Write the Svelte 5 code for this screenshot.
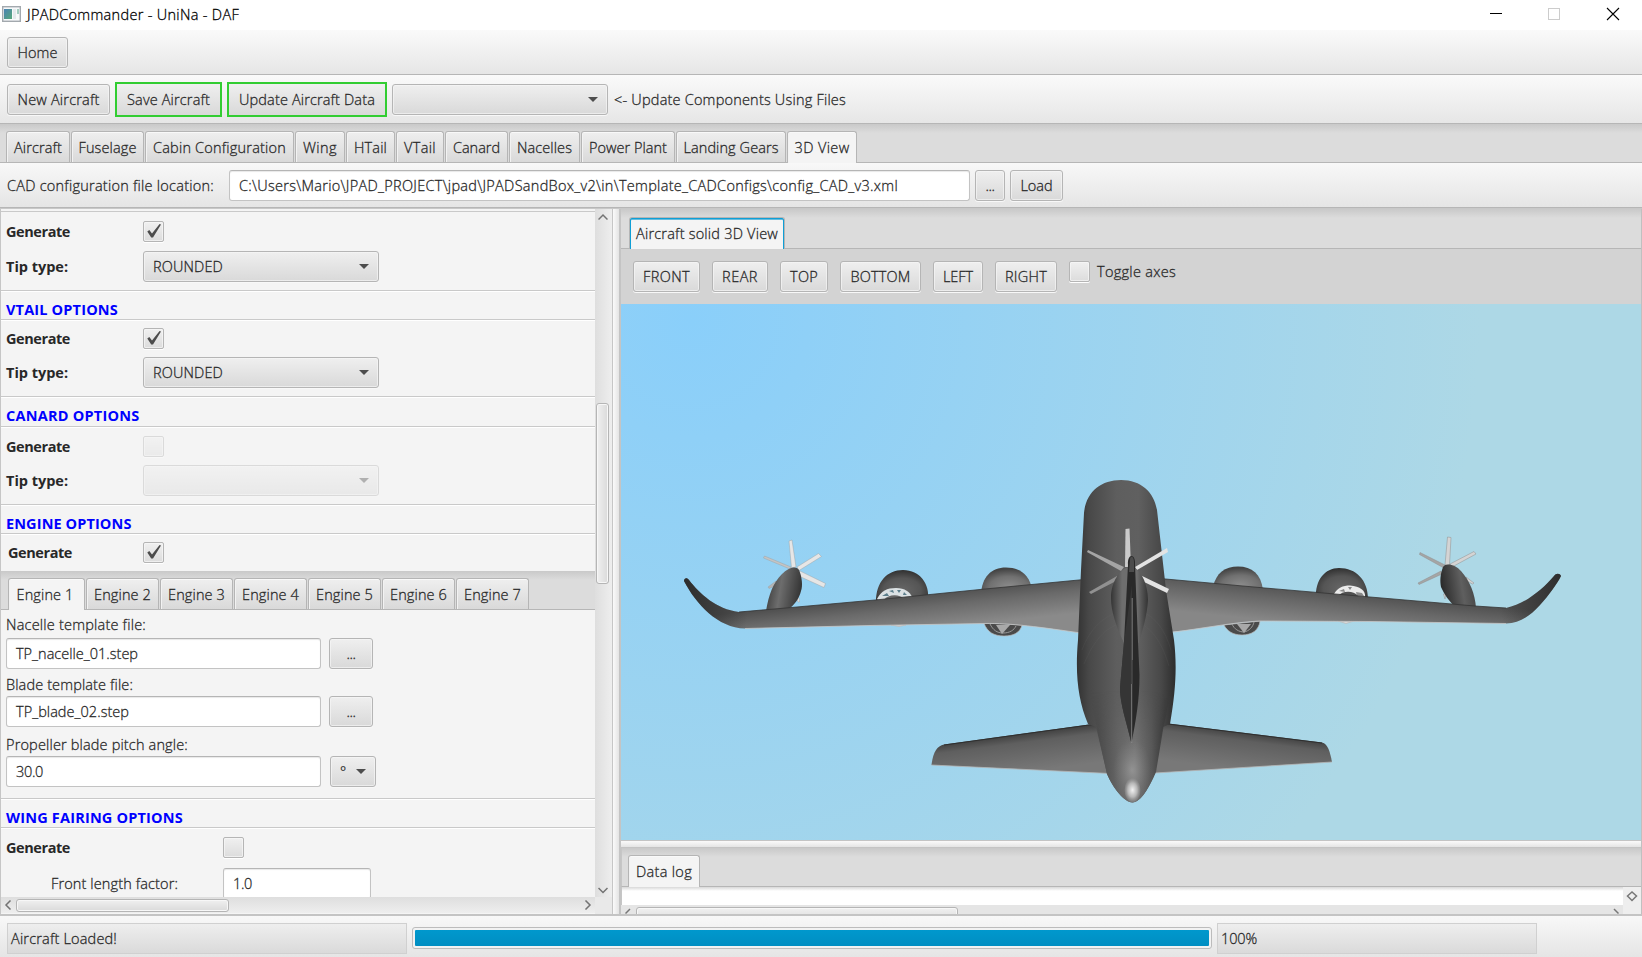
<script>
  // Tunes the tracking of a label so that it takes up the given width.
  function fit(node, width) {
    const natural = node.getBoundingClientRect().width;
    const n = node.textContent.length;
    if (width && n) node.style.letterSpacing = ((width - natural) / n).toFixed(3) + 'px';
  }

  const tabs = [
    ['Aircraft', 64, 48], ['Fuselage', 73, 58], ['Cabin Configuration', 149, 133],
    ['Wing', 50, 34], ['HTail', 49, 33], ['VTail', 48, 32], ['Canard', 63, 47],
    ['Nacelles', 71, 55], ['Power Plant', 94, 78], ['Landing Gears', 110, 95], ['3D View', 70, 55]
  ];
  const engines = [1, 2, 3, 4, 5, 6, 7];
  const views = [
    ['FRONT', 67, 47], ['REAR', 56, 36], ['TOP', 48, 28], ['BOTTOM', 81, 60],
    ['LEFT', 50, 30], ['RIGHT', 62, 42]
  ];
  const leftWing = 'M684 581C684 578 687 577 689 580C700 594 716 609 739 612L780 608.5 875 600 985 589 1084 579.5V633.5L1050 628.5C1020 625 1000 623 985 623.5L870 625.5 745 628.5C718 628 696 604 684 581Z';
  const rightWing = 'M1160 578.5 1265 588 1370 597 1475 606 1506 608C1525 604 1542 590 1554 576C1556 573 1560 573 1561 576C1557 584 1549 595 1540 605C1530 616 1520 623 1506 623.5L1370 621.5 1260 621C1235 622 1200 629 1170 632Z';
</script>

{#snippet t(text, w)}<span class="t" use:fit={w}>{text}</span>{/snippet}

{#snippet check(on, disabled)}
  <span class="check" class:disabled>
    {#if on}
      <svg width="21" height="21" viewBox="0 0 21 21"><path d="M4.3 10.400 6.300 9 9 12.600 16.600 3 18 3.400 10 16.600H8.200Z" fill="#4c4c4c" /></svg>
    {/if}
  </span>
{/snippet}

{#snippet combo(cls, text, w, disabled)}
  <span class="btn combo {cls}" class:disabled>
    <span>{#if text}{@render t(text, w)}{/if}</span>
    <svg width="10" height="5" viewBox="0 0 10 5"><path d="M0 0H10L5 5Z" fill="#4d4d4d" /></svg>
  </span>
{/snippet}

{#snippet chevron(d)}
  <svg class="chev" width="10" height="10" viewBox="0 0 10 10"><path {d} fill="none" stroke="#737373" stroke-width="1.5" /></svg>
{/snippet}

<div class="window">
  <header class="title">
    <svg width="19" height="16" viewBox="0 0 19 16">
      <defs><linearGradient id="ico" x2="1" y2="1"><stop stop-color="#4b83b5" /><stop offset="1" stop-color="#57a87a" /></linearGradient></defs>
      <rect x=".7" y=".7" width="17.6" height="14.6" fill="#f7f9fa" stroke="#a3a9ae" stroke-width="1.4" />
      <rect x="2" y="3" width="8" height="10" fill="url(#ico)" />
      <path d="M11 3h3v10h-3z" fill="#e4e9ec" /><path d="M16 3v5" stroke="#51a086" />
    </svg>
    {@render t('JPADCommander - UniNa - DAF', 212)}
    <svg class="win" width="140" height="14" viewBox="0 0 140 14">
      <path d="M5 6.5H17" stroke="#000" fill="none" />
      <rect x="63.5" y="1.5" width="11" height="11" fill="none" stroke="#ccc" />
      <path d="M122 1 134 13M134 1 122 13" stroke="#000" stroke-width="1.1" fill="none" />
    </svg>
  </header>

  <div class="bar home"><span class="btn w-home">{@render t('Home', 40)}</span></div>

  <div class="bar actions">
    <span class="btn w-new">{@render t('New Aircraft', 82)}</span>
    <span class="btn green w-save">{@render t('Save Aircraft', 83)}</span>
    <span class="btn green w-update">{@render t('Update Aircraft Data', 136)}</span>
    {@render combo('w-files', '', 0, false)}
    <span class="hint">{@render t('<- Update Components Using Files', 232)}</span>
  </div>

  <nav class="tabs main">
    {#each tabs as [name, w, tw], i}
      <span class="tab" class:active={i === 10} style="width:{w}px">{@render t(name, tw)}</span>
    {/each}
  </nav>

  <div class="bar cad">
    <span class="cadlabel">{@render t('CAD configuration file location:', 207)}</span>
    <span class="field w-path">{@render t('C:\\Users\\Mario\\JPAD_PROJECT\\jpad\\JPADSandBox_v2\\in\\Template_CADConfigs\\config_CAD_v3.xml', 659)}</span>
    <span class="btn w-dots">{@render t('...', 9)}</span>
    <span class="btn w-load">{@render t('Load', 32)}</span>
  </div>

  <main>
    <section class="left">
      <div class="view">
        <div class="group g1">
          <div class="row r-check"><b>{@render t('Generate', 64)}</b>{@render check(true, false)}</div>
          <div class="row r-combo"><b>{@render t('Tip type:', 62)}</b>{@render combo('w-tip', 'ROUNDED', 70, false)}</div>
        </div>
        <h2 class="h29">{@render t('VTAIL OPTIONS', 112)}</h2>
        <div class="group g2">
          <div class="row r-check"><b>{@render t('Generate', 64)}</b>{@render check(true, false)}</div>
          <div class="row r-combo"><b>{@render t('Tip type:', 62)}</b>{@render combo('w-tip', 'ROUNDED', 70, false)}</div>
        </div>
        <h2 class="h30">{@render t('CANARD OPTIONS', 133.5)}</h2>
        <div class="group g3">
          <div class="row r-check"><b>{@render t('Generate', 64)}</b>{@render check(false, true)}</div>
          <div class="row r-combo"><b>{@render t('Tip type:', 62)}</b>{@render combo('w-tip', '', 0, true)}</div>
        </div>
        <h2 class="h29">{@render t('ENGINE OPTIONS', 125.5)}</h2>
        <div class="row r-engine"><b>{@render t('Generate', 64)}</b>{@render check(true, false)}</div>
        <nav class="tabs engine">
          {#each engines as n}
            <span class="tab" class:active={n === 1}>{@render t('Engine ' + n, 57)}</span>
          {/each}
        </nav>
        <div class="form">
          <div class="lab l1">{@render t('Nacelle template file:', 140)}</div>
          <div class="frow"><span class="field">{@render t('TP_nacelle_01.step', 122)}</span><span class="btn">{@render t('...', 9)}</span></div>
          <div class="lab l2">{@render t('Blade template file:', 127)}</div>
          <div class="frow"><span class="field">{@render t('TP_blade_02.step', 113)}</span><span class="btn">{@render t('...', 9)}</span></div>
          <div class="lab l3">{@render t('Propeller blade pitch angle:', 182)}</div>
          <div class="frow unit"><span class="field">{@render t('30.0', 27)}</span>{@render combo('w-deg', '°', 5, false)}</div>
        </div>
        <h2 class="h29">{@render t('WING FAIRING OPTIONS', 177)}</h2>
        <div class="row wide"><b>{@render t('Generate', 64)}</b>{@render check(false, false)}</div>
        <div class="row wide indent"><span class="name">{@render t('Front length factor:', 127)}</span><span class="field">{@render t('1.0', 19)}</span></div>
      </div>
      <div class="vbar">
        {@render chevron('M.5 7.5 5 3 9.5 7.5')}
        <div class="track"><span class="thumb"></span></div>
        {@render chevron('M.5 2 5 6.5 9.5 2')}
      </div>
      <div class="hbar">
        {@render chevron('M8.5.5 4 5 8.5 9.5')}
        <span class="thumb"></span>
        {@render chevron('M2.5.5 7 5 2.5 9.5')}
      </div>
      <div class="corner"></div>
    </section>

    <div class="split"></div>

    <section class="right">
      <nav class="tabs solid"><span class="tab active focus">{@render t('Aircraft solid 3D View', 142)}</span></nav>
      <div class="views">
        {#each views as [name, w, tw]}
          <span class="btn" style="width:{w}px">{@render t(name, tw)}</span>
        {/each}
        <span class="toggle">{@render check(false, false)}{@render t('Toggle axes', 79)}</span>
      </div>

      <svg class="scene" width="1020" height="536" viewBox="621 304 1020 536">
        <defs>
          <radialGradient id="sky" gradientUnits="userSpaceOnUse" cx="690" cy="320" r="790">
            <stop offset="0" stop-color="#8acffa" /><stop offset=".15" stop-color="#8fd0f7" /><stop offset="1" stop-color="#add8e6" />
          </radialGradient>
          <linearGradient id="wingL" gradientUnits="userSpaceOnUse" x1="880" y1="597" x2="884" y2="634">
            <stop stop-color="#4e4e4e" /><stop offset=".4" stop-color="#6a6a6a" /><stop offset="1" stop-color="#8a8a8a" />
          </linearGradient>
          <linearGradient id="wingR" gradientUnits="userSpaceOnUse" x1="1362" y1="592" x2="1358" y2="630">
            <stop stop-color="#4e4e4e" /><stop offset=".4" stop-color="#676767" /><stop offset="1" stop-color="#878787" />
          </linearGradient>
          <linearGradient id="tipL" gradientUnits="userSpaceOnUse" x1="684" y1="590" x2="750" y2="600">
            <stop stop-color="#222" stop-opacity=".75" /><stop offset="1" stop-color="#222" stop-opacity="0" />
          </linearGradient>
          <linearGradient id="tipR" gradientUnits="userSpaceOnUse" x1="1561" y1="585" x2="1498" y2="600">
            <stop stop-color="#222" stop-opacity=".7" /><stop offset="1" stop-color="#222" stop-opacity="0" />
          </linearGradient>
          <linearGradient id="tailL" gradientUnits="userSpaceOnUse" x1="1020" y1="733" x2="1025" y2="772">
            <stop stop-color="#3e3e3e" /><stop offset=".25" stop-color="#5f5f5f" /><stop offset="1" stop-color="#787878" />
          </linearGradient>
          <linearGradient id="tailR" gradientUnits="userSpaceOnUse" x1="1245" y1="731" x2="1240" y2="770">
            <stop stop-color="#3e3e3e" /><stop offset=".25" stop-color="#5f5f5f" /><stop offset="1" stop-color="#787878" />
          </linearGradient>
          <linearGradient id="body" gradientUnits="userSpaceOnUse" x1="1077" y1="0" x2="1176" y2="0">
            <stop stop-color="#333" /><stop offset=".12" stop-color="#484848" /><stop offset=".4" stop-color="#5e5e5e" /><stop offset=".62" stop-color="#606060" /><stop offset=".85" stop-color="#484848" /><stop offset="1" stop-color="#2c2c2c" />
          </linearGradient>
          <linearGradient id="cone" gradientUnits="userSpaceOnUse" x1="1098" y1="0" x2="1165" y2="0">
            <stop stop-color="#4a4a4a" /><stop offset=".3" stop-color="#656565" /><stop offset=".55" stop-color="#747474" /><stop offset=".8" stop-color="#595959" /><stop offset="1" stop-color="#353535" />
          </linearGradient>
          <linearGradient id="fade" gradientUnits="userSpaceOnUse" x1="0" y1="690" x2="0" y2="750">
            <stop stop-color="#fff" stop-opacity="0" /><stop offset="1" stop-color="#fff" />
          </linearGradient>
          <mask id="fadeMask" maskUnits="userSpaceOnUse" x="1060" y="640" width="150" height="170"><rect x="1060" y="640" width="150" height="170" fill="url(#fade)" /></mask>
          <radialGradient id="spot"><stop stop-color="#f2f2f2" /><stop offset=".6" stop-color="#b5b5b5" /><stop offset="1" stop-color="#888" stop-opacity=".5" /></radialGradient>
          <radialGradient id="glow"><stop stop-color="#a8a8a8" stop-opacity=".6" /><stop offset="1" stop-color="#888" stop-opacity="0" /></radialGradient>
          <radialGradient id="podDark" cx=".5" cy=".6" r=".6"><stop stop-color="#666" /><stop offset=".6" stop-color="#555" /><stop offset="1" stop-color="#303030" /></radialGradient>
          <radialGradient id="podLight" cx=".55" cy=".7" r=".65"><stop stop-color="#8d8d8d" /><stop offset=".6" stop-color="#707070" /><stop offset="1" stop-color="#444" /></radialGradient>
          <linearGradient id="podL" x1="0" y1=".4" x2="1" y2=".6"><stop stop-color="#3b3b3b" /><stop offset=".4" stop-color="#6d6d6d" /><stop offset="1" stop-color="#303030" /></linearGradient>
          <linearGradient id="podR" x1="0" y1=".6" x2="1" y2=".4"><stop stop-color="#262626" /><stop offset=".6" stop-color="#5f5f5f" /><stop offset="1" stop-color="#444" /></linearGradient>
          <linearGradient id="midpod" x2="1"><stop stop-color="#353535" /><stop offset=".3" stop-color="#6e6e6e" /><stop offset=".7" stop-color="#6e6e6e" /><stop offset="1" stop-color="#333" /></linearGradient>
        </defs>
        <rect x="621" y="304" width="1020" height="536" fill="url(#sky)" />

        <!-- outer propellers -->
        <g fill="#e6e6e6" stroke="#9a9a9a" stroke-width=".4">
          <path d="M791.500 568 789 541 792 540 796 567Z" />
          <path d="M797 567 818.500 553.500 821.500 556.500 799 570.500Z" />
          <path d="M799 570.500 825.500 583.500 824 587.500 801 577Z" />
          <path d="M790 569 763.500 558 764.500 556 791 567Z" fill="#c4c4c4" />
          <path d="M776 581 768 587 769 588.500 775 586Z" fill="#b5b5b5" />
          <path d="M797 598 799 598 799.500 602 798 602Z" />
        </g>
        <g fill="#d4d4d4" stroke="#8f8f8f" stroke-width=".5">
          <path d="M1445 565 1447.500 537 1451 537.500 1449.500 565Z" />
          <path d="M1450 564 1474 551.500 1476 554 1452 567Z" />
          <path d="M1445 565 1420 552.500 1419.500 554.500 1443 567.500Z" fill="#a5a5a5" />
          <path d="M1441 571 1418 583 1419 584.500 1442 574Z" fill="#a5a5a5" />
          <path d="M1466 577 1474 583 1472.500 584 1467 581Z" />
          <path d="M1443.500 594 1446 594 1445 599Z" />
        </g>

        <!-- engine pods above the wing -->
        <path d="M876 602C876 582 887 570 903 570C920 570 930 584 928 600V604H876Z" fill="url(#podDark)" />
        <path d="M877 599C881 591 887 588 896 588C905 588 910 592 912 597L906 600H878Z" fill="#dbe1e3" />
        <path d="M882 596l5-3 2 3zM889 591l4-1 1 3zM897 590h4l-2 3zM904 592l3 3h-4z" fill="#5c7e8b" />
        <path d="M884 600C888 594 900 594 904 599Z" fill="#656565" />
        <path d="M981 594C982 577 991 567.500 1006 567.500C1020 567.500 1030 575 1032 590V596H981Z" fill="url(#podLight)" />
        <path d="M1213 587C1216 573 1225 566.500 1238 566.500C1252 566.500 1261 574 1263 590V594H1213Z" fill="url(#podLight)" />
        <path d="M1316 598C1315 580 1325 568 1339 568C1356 568 1368 580 1368 599V602H1316Z" fill="url(#podDark)" />
        <path d="M1334 594C1337 588 1343 585.500 1350 585.500C1360 586 1366 591 1365 597H1336Z" fill="#ebebeb" />
        <path d="M1339 591l5-2 1 3zM1348 587h4l-2 3zM1356 592l6 1 2 3h-7z" fill="#8a8a8a" />
        <path d="M1338 596C1342 591 1353 590 1358 596Z" fill="#505050" />

        <!-- engine intakes below the wing -->
        <g stroke="#b7b7b7" stroke-width=".7">
          <path d="M984 623C987 632 994 636 1004 636C1013 636 1020 633 1022 625Z" fill="#4a4a4a" />
          <path d="M1224 625C1227 631 1233 635 1242 635C1252 635 1259 630 1260 621Z" fill="#4a4a4a" />
          <path d="M891 625H906L899 626.500Z" fill="#ddd" /><path d="M1338 621H1354L1346 623.500Z" fill="#ddd" />
        </g>
        <path d="M990 624C993 630 997 633 1003 633C1010 633 1014 630 1016 626" fill="none" stroke="#999" />
        <path d="M996 625H1010L1002 634Z" fill="#a9a9a9" />
        <path d="M1232 624C1234 629 1239 632 1244 632C1249 631 1253 627 1254 622" fill="none" stroke="#999" />
        <path d="M1237 624H1251L1244 633Z" fill="#a9a9a9" />

        <!-- turboprop nacelles -->
        <path d="M766 611C769 594 773 583 782 574C788 568 796 565 799 570C802 577 803 586 801 591C799 599 794 606 787 610Z" fill="url(#podL)" />
        <path d="M1476 608C1475 594 1470 581 1461 571C1456 565 1446 562 1443 567C1440 575 1440 581 1441 587C1444 594 1449 601 1455 607Z" fill="url(#podR)" />

        <!-- wings -->
        <path d={leftWing} fill="url(#wingL)" />
        <path d={leftWing} fill="url(#tipL)" />
        <path d={rightWing} fill="url(#wingR)" />
        <path d={rightWing} fill="url(#tipR)" />
        <path d="M745 628.500 870 625.500 985 623.500C1010 623 1040 627 1084 633.500M1170 632.500C1200 629 1235 622 1260 621L1370 621.500 1506 623.500" fill="none" stroke="#c6c6c6" stroke-width=".8" />
        <path d="M739 612 780 608.500 875 600 985 589 1084 579.500M1160 578.500 1265 588 1370 597 1475 606 1506 608" fill="none" stroke="#353535" stroke-width=".8" />

        <!-- tailplane -->
        <path d="M1100 723 944 744.500C937 746 933 752 931.500 765L1110 773.500Z" fill="url(#tailL)" />
        <path d="M1160 722.500 1322 742.500C1328 744 1330 752 1332 762L1155 773Z" fill="url(#tailR)" />
        <path d="M931.500 765 1110 773.500M1332 762 1155 773" stroke="#b5b5b5" stroke-width=".8" fill="none" />
        <path d="M1100 723.500 944 745M1160 723 1322 743" stroke="#2f2f2f" fill="none" />

        <!-- fuselage -->
        <path d="M1084 513C1086 492 1101 480 1121 480C1141 480 1154 492 1157 510L1166 590 1174 640C1177 665 1176 690 1170 724L1163 727 1155 773C1149 788 1141 802 1132.500 802.500C1124 802 1113 788 1107 774L1096 727 1088 724C1078 700 1075 675 1078 640L1081 570Z" fill="url(#body)" />
        <path d="M1096 724C1090 700 1090 680 1095 660H1165C1172 680 1170 700 1164 724L1156 772C1149 788 1141 802 1132.500 802.500C1124 802 1113 788 1107 774Z" fill="url(#cone)" mask="url(#fadeMask)" />
        <ellipse cx="1132" cy="770" rx="19" ry="31" fill="url(#glow)" />
        <ellipse cx="1132.500" cy="790" rx="8" ry="12" fill="url(#spot)" />
        <g fill="none" stroke="#777" stroke-opacity=".12">
          <path d="M1082 650C1090 628 1105 615 1120 612M1084 664C1094 640 1106 627 1120 624M1143 612C1156 618 1165 630 1171 650M1142 624C1155 632 1163 646 1169 666" />
        </g>

        <!-- tail propeller, pod and fin -->
        <path d="M1125.500 529 1129.500 528.500 1131 567H1125Z" fill="#cacaca" />
        <path d="M1167 548 1168 552 1137 570 1135 567Z" fill="#e3e3e3" />
        <path d="M1138 574 1169 589 1167 593 1142 581Z" fill="#e3e3e3" />
        <path d="M1088 550 1124 567 1121 571 1087 552Z" fill="#a5a5a5" />
        <path d="M1089 592 1117 576 1118 580 1091 594Z" fill="#919191" />
        <path d="M1124 643C1116 626 1111 611 1111 598C1111 582 1120 568 1130 567C1141 567 1148 585 1148 600C1147 617 1142 631 1139 643Z" fill="url(#midpod)" />
        <path d="M1128 565C1127 553 1136 553 1135 565L1138 642 1139.500 675C1139.500 700 1136 720 1131.500 743C1126 720 1120 704 1120 688L1124 642Z" fill="#292929" />
        <path d="M1130 560C1130 555 1134 556 1134 562V572H1129Z" fill="#4c4c4c" />
        <path d="M1129 605 1132 585V610L1131 742C1126 720 1120 704 1120 688L1124 642Z" fill="#3b3b3b" opacity=".7" />
        <path d="M1132.200 598V660M1131.700 684V743" stroke="#939393" fill="none" stroke-width=".8" />
        <path d="M1132 660V684" stroke="#666" fill="none" stroke-width=".8" />
      </svg>

      <div class="hsplit"></div>
      <nav class="tabs log"><span class="tab active">{@render t('Data log', 56)}</span></nav>
      <div class="logarea">
        <div class="loghead"></div>
        <svg class="logv" width="18" height="27" viewBox="0 0 18 27"><path d="M4.500 9 9 5 13.500 9 9 13.500Z" fill="none" stroke="#777" stroke-width="1.500" /></svg>
        <div class="logh">
          <svg width="12" height="9" viewBox="0 0 12 9"><path d="M9 4 4.500 8.500" stroke="#777" stroke-width="1.500" /></svg>
          <span class="thumb"></span>
          <svg width="12" height="9" viewBox="0 0 12 9"><path d="M3 4 7.500 8.500" stroke="#777" stroke-width="1.500" /></svg>
        </div>
      </div>
    </section>
    <div class="edge"></div>
  </main>

  <footer>
    <span class="status">{@render t('Aircraft Loaded!', 106)}</span>
    <span class="progress"><i></i></span>
    <span class="status pct">{@render t('100%', 36)}</span>
  </footer>
</div>

<style>
  :global(body) { margin: 0; }
  .window, .window * { box-sizing: border-box; }
  .window {
    width: 1642px; height: 957px; overflow: hidden; display: flex; flex-direction: column;
    background: #f4f4f4; color: #282828; font: 300 14.5px/20px "Open Sans", "Noto Sans", sans-serif;
  }
  .t { display: block; flex: none; white-space: pre; width: max-content; -webkit-text-stroke: .28px; }
  b .t, h2 .t { -webkit-text-stroke: 0; }
  svg { display: block; flex: none; }
  .title { height: 30px; flex: none; background: #fff; color: #000; display: flex; align-items: center; padding: 0 17px 2px 2px; gap: 6px; }
  .title .t { padding-top: 2px; }
  .win { margin-left: auto; }
  .bar { flex: none; display: flex; align-items: center; background: linear-gradient(#fafafa, #e6e6e6); border-bottom: 1px solid #b6b6b6; padding-left: 7px; }
  .bar .t, .main .tab:not(.active) .t { padding-top: 1px; }
  .home { height: 45px; padding-top: 1px; }
  .actions { height: 49px; gap: 5px; padding-top: 1px; }
  .cad { height: 45px; padding-top: 1px; background: linear-gradient(#f8f8f8, #e5e5e5); }
  .btn {
    display: flex; flex: none; align-items: center; justify-content: center; height: 31px; border-radius: 3px;
    border: 1px solid #b5b5b5; background: linear-gradient(#efefef, #d9d9d9); box-shadow: inset 0 0 0 1px #f6f6f6aa, 0 1px 0 #f8f8f8;
  }
  .w-home { width: 61px; }
  .w-new { width: 103px; }
  .w-save { width: 107px; }
  .w-update { width: 160px; }
  .green { height: 35px; border: 2px solid #32cd32; border-radius: 0; box-shadow: none; }
  .combo { justify-content: space-between; padding: 0 9px; }
  .w-files { width: 216px; }
  .hint { margin-left: 1px; }
  .tabs { display: flex; flex: none; align-items: flex-end; gap: 1px; border-bottom: 1px solid #b6b6b6; background: linear-gradient(#c9c9c9, #dcdcdc 9px); }
  .main { height: 39px; padding-left: 6px; }
  .tab {
    height: 31px; display: flex; flex: none; align-items: center; justify-content: center; border: 1px solid #b5b5b5; border-bottom: 0;
    border-radius: 3px 3px 0 0; background: linear-gradient(#efefef, #d9d9d9); box-shadow: inset 0 1px #f9f9f9, inset 1px 0 #f2f2f2;
  }
  .tab.active { height: 32px; margin-bottom: -1px; background: #f4f4f4; }
  .cadlabel { width: 222px; }
  .field { height: 31px; flex: none; display: flex; align-items: center; background: #fff; border: 1px solid #c3c3c3; border-top-color: #b5b5b5; border-radius: 3px; padding-left: 9px; box-shadow: inset 0 1px 1px #e8e8e8; }
  .w-path { width: 741px; }
  .w-dots { width: 30px; margin-left: 5px; }
  .w-load { width: 53px; margin-left: 5px; }

  main { height: 708px; flex: none; display: flex; background: #c8c8c8; padding-top: 1px; border-bottom: 2px solid #c4c4c4; }
  .left { width: 612px; display: grid; grid-template: 688px 17px / 594px 17px; border-left: 1px solid #c6c6c6; background: #f4f4f4; }
  .view { overflow: hidden; height: 688px; display: flow-root; }
  .row { display: flex; align-items: center; padding-left: 5px; }
  .row b { width: 137px; flex: none; font-weight: 700; }
  h2 { margin: 0; padding: 9px 0 0 5px; font-size: 14.5px; font-weight: 700; line-height: 20px; color: #00f; border: 0 solid #c9c9c9; border-width: 1px 0; box-shadow: 0 1px #fff, inset 0 1px #fff; }
  .h29 { height: 30px; }
  .h30 { height: 31px; }
  .r-check { height: 21px; }
  .r-combo { height: 31px; }
  .w-tip { width: 236px; }
  .group { display: grid; align-content: start; row-gap: 8px; }
  .g1 { height: 79px; border-top: 1px solid #c9c9c9; margin-top: 2px; padding-top: 9px; row-gap: 9px; }
  .g2 { height: 76px; padding-top: 8px; }
  .g3 { height: 77px; padding-top: 9px; }
  .check { width: 21px; height: 21px; flex: none; display: block; border: 1px solid #b5b5b5; border-radius: 2px; background: linear-gradient(#f0f0f0, #dcdcdc); box-shadow: inset 0 0 0 1px #f7f7f7aa, 0 1px #fff; }
  .check svg { margin: -1px; }
  .disabled { opacity: .4; }
  .r-engine { height: 37px; padding: 0 0 1px 7px; }
  .r-engine b { width: 135px; padding-top: 1px; }
  .engine { height: 39px; padding-left: 7px; }
  .engine .tab { width: 73px; padding-top: 1px; }
  .engine .tab.active { width: 77px; padding-right: 3px; }
  .form { height: 188px; padding-left: 5px; display: flow-root; }
  .lab { height: 20px; }
  .l1 { margin: 5px 0 3px; }
  .l2 { margin: 6px 0 1px; }
  .l3 { margin: 8px 0 1px; }
  .frow { display: flex; gap: 8px; }
  .frow .field { width: 315px; }
  .frow .btn { width: 44px; }
  .frow.unit { gap: 9px; }
  .frow .w-deg { width: 46px; }
  .wide { height: 21px; margin-top: 9px; }
  .wide b { width: 217px; }
  .wide .name { width: 172px; }
  .indent { height: 31px; margin-top: 10px; padding-left: 50px; }
  .indent .field { width: 148px; }
  .vbar { display: flex; flex-direction: column; align-items: center; justify-content: space-between; background: linear-gradient(90deg, #dedede, #eee); padding: 3px 2px 1px 0; }
  .track { flex: 1; padding-top: 181px; }
  .thumb { display: block; border: 1px solid #b5b5b5; border-radius: 3px; background: linear-gradient(#f0f0f0, #dadada); box-shadow: inset 0 0 0 1px #f7f7f7; }
  .track .thumb { width: 13px; height: 181px; background: linear-gradient(90deg, #f0f0f0, #dadada); }
  .hbar { display: flex; align-items: center; background: linear-gradient(#dedede, #eee); border-bottom: 1px solid #f4f4f4; padding: 0 2px 0 1px; }
  .hbar .thumb { width: 213px; height: 13px; margin: 0 auto 0 4px; }
  .corner { background: #e9e9e9; }
  .split { width: 9px; background: linear-gradient(90deg, #fafafa, #e4e4e4); border-left: 1px solid #c6c6c6; border-right: 2px solid #c4c4c4; }
  .right { width: 1020px; display: flex; flex-direction: column; overflow: hidden; }
  .edge { width: 1px; background: #c0c0c0; }
  .solid { height: 40px; padding-left: 8px; }
  .solid .tab { width: 156px; }
  .focus.focus { border-color: #b5b5b5; box-shadow: inset 1px 0 #0f9fd6, inset -1px 0 #0f9fd6, inset 0 1px #0f9fd6, inset 0 2px #66bddf; }
  .views { height: 55px; flex: none; display: flex; gap: 12px; padding: 12px; background: #d3d3d3; }
  .toggle { display: flex; gap: 7px; height: 21px; align-items: center; }
  .scene { flex: none; }
  .hsplit { height: 8px; flex: none; background: linear-gradient(#fafafa, #e4e4e4); border-top: 1px solid #c4c4c4; border-bottom: 1px solid #c4c4c4; }
  .log { height: 39px; padding-left: 6px; border-left: 1px solid #c6c6c6; }
  .log .tab { width: 72px; }
  .logarea { height: 27px; display: grid; grid-template: 18px 9px / 1002px 18px; }
  .loghead { background: linear-gradient(#d8d8d8, #fff 4px); border-left: 1px solid #c6c6c6; }
  .logv { grid-row: span 2; background: #eee; }
  .logh { display: flex; background: #e5e5e5; overflow: hidden; }
  .logh .thumb { width: 322px; height: 16px; margin: 2px auto 0 3px; }
  footer { flex: 1; display: flex; align-items: flex-start; background: linear-gradient(#f8f8f8, #e5e5e5); padding: 7px 0 0 7px; }
  .status { width: 400px; height: 31px; flex: none; display: flex; align-items: center; border: 1px solid #d0d0d0; background: linear-gradient(#eee, #dadada); padding-left: 3px; }
  .progress { width: 800px; height: 22px; flex: none; margin: 4px 5px 0; border: 1px solid #bcbcbc; border-radius: 3px; padding: 2px; background: #f2f2f2; }
  .progress i { display: block; height: 16px; background: linear-gradient(#0098cd, #008ec2); border-radius: 1px; }
  .pct { width: 320px; }
</style>
